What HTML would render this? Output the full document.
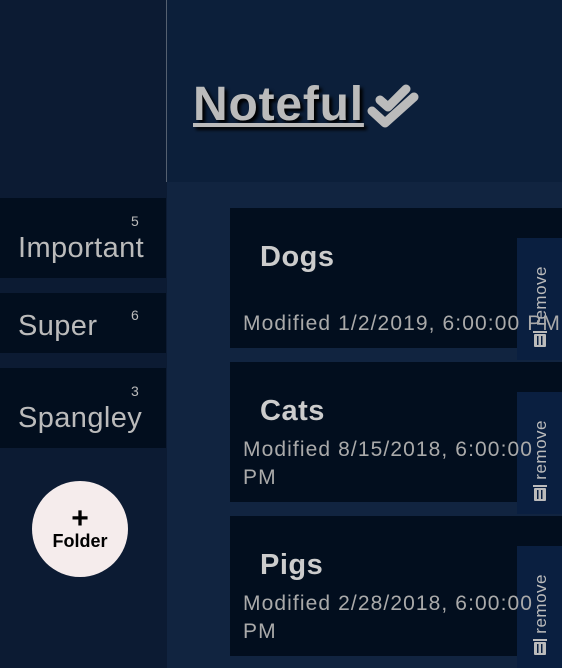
<!DOCTYPE html>
<html><head><style>
body{margin:0;width:562px;height:668px;overflow:hidden;background:#0c1b33;font-family:"Liberation Sans",sans-serif;position:relative}
.abs{position:absolute}
.hdr{left:166px;top:0;width:396px;height:182px;background:#0c1f3a;border-left:1px solid #556070}
.main{left:167px;top:182px;width:395px;height:486px;background:#112440}
.f{left:0;width:166px;background:#020e1e;color:#bbb}
.f span{position:absolute;left:18px;font-size:29px;letter-spacing:0.4px}
.f b{position:absolute;left:131px;font-size:14px;font-weight:normal;color:#bbb}
.n{left:230px;width:332px;height:140px;background:#020e1e}
.t{left:230px;width:332px;height:140px;color:#bbb;z-index:2}
.t h2{position:absolute;left:30px;top:33px;margin:0;font-size:29px;font-weight:bold;color:#ccc;letter-spacing:0.5px}
.t p{position:absolute;left:13px;margin:0;font-size:21px;line-height:28px;white-space:nowrap;letter-spacing:1.1px;color:#aaa}
.rm{left:517px;width:45px;height:122px;background:#0a1f40;z-index:1}
.rm i{position:absolute;left:14px;top:28px;writing-mode:vertical-rl;transform:rotate(180deg);font-style:normal;color:#bbb;font-size:17px;letter-spacing:0.5px}
.rm svg{position:absolute;left:16px;top:92px}
</style></head><body>
<div class="abs hdr"></div>
<div class="abs" style="left:193px;top:77px;font-size:48px;font-weight:bold;color:#bbb;text-decoration:underline;text-shadow:3px 3px 3px #000;letter-spacing:0.8px">Noteful</div>
<svg class="abs" style="left:366px;top:78px" width="56" height="56" viewBox="0 0 56 56"><g stroke="#bbb" stroke-width="9" fill="none" stroke-linecap="round" stroke-linejoin="round"><path d="M14 22 L22 29 L40 11"/><path d="M6 33 L19 45 L48 19"/></g></svg>
<div class="abs main"></div>
<div class="abs f" style="top:198px;height:80px"><b style="top:15px">5</b><span style="top:34px">Important</span></div>
<div class="abs f" style="top:293px;height:60px"><b style="top:14px">6</b><span style="top:17px">Super</span></div>
<div class="abs f" style="top:368px;height:80px"><b style="top:15px">3</b><span style="top:34px">Spangley</span></div>
<div class="abs" style="left:32px;top:481px;width:96px;height:96px;border-radius:50%;background:#f5ecec;text-align:center;font-weight:bold;color:#000"><div style="font-size:30px;margin-top:24px;line-height:28px">+</div><div style="font-size:18px;margin-top:-2px">Folder</div></div>

<div class="abs n" style="top:208px"></div>
<div class="abs rm" style="top:238px"><i>remove</i><svg width="14" height="18" viewBox="0 0 14 18"><rect x="0" y="1" width="14" height="2" fill="#bbb"/><rect x="1" y="4" width="12" height="13" rx="1" fill="#bbb"/><rect x="4" y="6" width="1.5" height="9" fill="#0a1f40"/><rect x="8" y="6" width="1.5" height="9" fill="#0a1f40"/></svg></div>
<div class="abs t" style="top:208px"><h2>Dogs</h2><p style="top:102px">Modified 1/2/2019, 6:00:00 PM</p></div>

<div class="abs n" style="top:362px"></div>
<div class="abs rm" style="top:392px"><i>remove</i><svg width="14" height="18" viewBox="0 0 14 18"><rect x="0" y="1" width="14" height="2" fill="#bbb"/><rect x="1" y="4" width="12" height="13" rx="1" fill="#bbb"/><rect x="4" y="6" width="1.5" height="9" fill="#0a1f40"/><rect x="8" y="6" width="1.5" height="9" fill="#0a1f40"/></svg></div>
<div class="abs t" style="top:362px"><h2>Cats</h2><p style="top:74px">Modified 8/15/2018, 6:00:00<br>PM</p></div>

<div class="abs n" style="top:516px"></div>
<div class="abs rm" style="top:546px"><i>remove</i><svg width="14" height="18" viewBox="0 0 14 18"><rect x="0" y="1" width="14" height="2" fill="#bbb"/><rect x="1" y="4" width="12" height="13" rx="1" fill="#bbb"/><rect x="4" y="6" width="1.5" height="9" fill="#0a1f40"/><rect x="8" y="6" width="1.5" height="9" fill="#0a1f40"/></svg></div>
<div class="abs t" style="top:516px"><h2>Pigs</h2><p style="top:74px">Modified 2/28/2018, 6:00:00<br>PM</p></div>
</body></html>
